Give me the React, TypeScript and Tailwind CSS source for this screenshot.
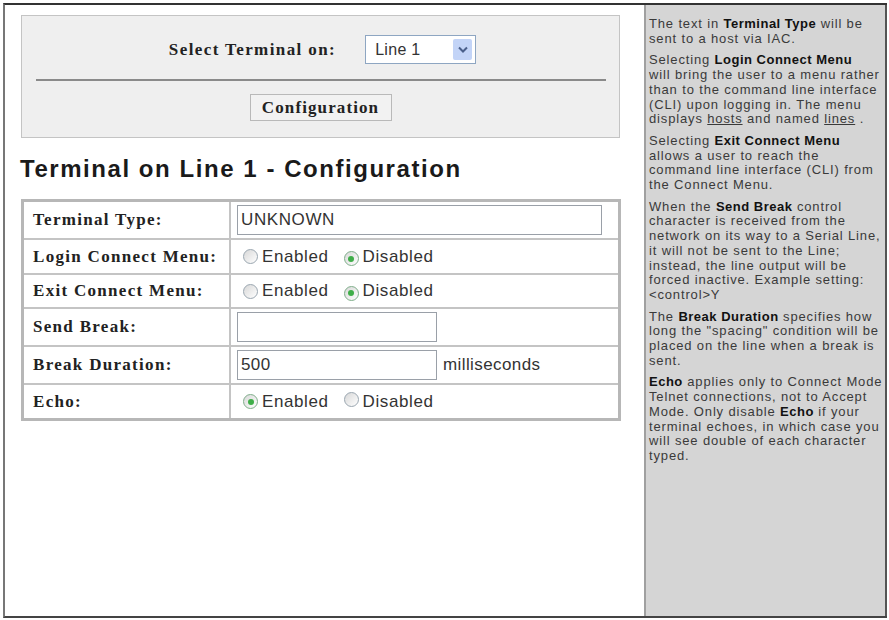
import React from "react";

const serif = { fontFamily: '"Liberation Serif", "Times New Roman", serif' };
const sans = { fontFamily: '"Liberation Sans", Arial, sans-serif' };

function Radio({ checked }: { checked?: boolean }) {
  return (
    <span
      className={
        "inline-flex w-[15px] h-[15px] rounded-full border items-center justify-center bg-gradient-to-br from-[#d8d8d8] to-white " +
        (checked ? "border-[#7fae8a]" : "border-[#9aa6b0]")
      }
    >
      {checked && <span className="w-[6px] h-[6px] rounded-full bg-[#3fae49]" />}
    </span>
  );
}

function RadioPair({ enabled }: { enabled: boolean }) {
  return (
    <div className="flex items-center ml-[6px] text-[17px] tracking-[0.6px] text-[#333]" style={sans}>
      <Radio checked={enabled} />
      <span className="ml-[4px]">Enabled</span>
      <span className="ml-[15px]">
        <Radio checked={!enabled} />
      </span>
      <span className="ml-[4px]">Disabled</span>
    </div>
  );
}

function Row({
  label,
  height,
  last,
  children,
}: {
  label: string;
  height: string;
  last?: boolean;
  children: React.ReactNode;
}) {
  return (
    <div className={"flex " + height + (last ? "" : " border-b-2 border-[#c4c4c4]")}>
      <div
        className="w-[207px] border-r-2 border-[#c4c4c4] flex items-center pl-[9px] font-bold text-[17px] tracking-[1.3px] text-[#222]"
        style={serif}
      >
        {label}
      </div>
      <div className="flex-1 flex items-center pl-[6px]">{children}</div>
    </div>
  );
}

const help: React.ReactNode[] = [
  <>
    The text in <b>Terminal Type</b> will be
    <br />
    sent to a host via IAC.
  </>,
  <>
    Selecting <b>Login Connect Menu</b>
    <br />
    will bring the user to a menu rather
    <br />
    than to the command line interface
    <br />
    (CLI) upon logging in. The menu
    <br />
    displays <span className="underline">hosts</span> and named <span className="underline">lines</span> .
  </>,
  <>
    Selecting <b>Exit Connect Menu</b>
    <br />
    allows a user to reach the
    <br />
    command line interface (CLI) from
    <br />
    the Connect Menu.
  </>,
  <>
    When the <b>Send Break</b> control
    <br />
    character is received from the
    <br />
    network on its way to a Serial Line,
    <br />
    it will not be sent to the Line;
    <br />
    instead, the line output will be
    <br />
    forced inactive. Example setting:
    <br />
    &lt;control&gt;Y
  </>,
  <>
    The <b>Break Duration</b> specifies how
    <br />
    long the "spacing" condition will be
    <br />
    placed on the line when a break is
    <br />
    sent.
  </>,
  <>
    <b>Echo</b> applies only to Connect Mode
    <br />
    Telnet connections, not to Accept
    <br />
    Mode. Only disable <b>Echo</b> if your
    <br />
    terminal echoes, in which case you
    <br />
    will see double of each character
    <br />
    typed.
  </>,
];

export default function App() {
  return (
    <div className="w-[889px] h-[620px] bg-white overflow-hidden pt-[3px] pl-[3px]">
      <div className="w-[884px] h-[615px] flex border-t-2 border-b-2 border-l-2 border-t-[#333] border-b-[#444] border-l-[#777]">
        {/* main */}
        <div className="w-[639px] pl-[16px] pt-[10px]">
          <div className="w-[599px] h-[123px] bg-[#efefef] border border-[#c4c4c4] flex flex-col items-center pt-[19px]">
            <div className="flex items-center h-[29px] ml-[4px]">
              <span className="font-bold text-[17px] tracking-[1.4px] text-[#222]" style={serif}>
                Select Terminal on:
              </span>
              <div className="ml-[29px] w-[111px] h-[29px] bg-white border border-[#8ea6c2] flex items-center justify-between pl-[9px] pr-[3px]">
                <span className="text-[16px] tracking-[0.3px] text-[#333]" style={sans}>
                  Line 1
                </span>
                <span className="w-[19px] h-[21px] bg-[#c3d4f7] rounded-[2px] flex items-center justify-center">
                  <svg width="10" height="7" viewBox="0 0 10 7">
                    <path d="M1 1.5 L5 5.5 L9 1.5" stroke="#4a5f8a" strokeWidth="2" fill="none" />
                  </svg>
                </span>
              </div>
            </div>
            <div className="w-[570px] h-[2px] bg-[#8a8a8a] mt-[15px]" />
            <button
              className="mt-[13px] w-[142px] h-[27px] bg-[#f2f2f2] border border-[#b9b9b9] font-bold text-[17px] tracking-[1.1px] text-[#222]"
              style={serif}
            >
              Configuration
            </button>
          </div>

          <h1
            className="mt-[17px] -ml-[1px] font-bold text-[24px] leading-[28px] tracking-[1.55px] text-[#1a1a1a]"
            style={sans}
          >
            Terminal on Line 1 - Configuration
          </h1>

          <div className="mt-[16px] w-[600px] border-[3px] border-[#b7b7b7]">
            <Row label="Terminal Type:" height="h-[38px]">
              <div
                className="w-[365px] h-[30px] border border-[#9aa0a8] bg-white flex items-center pl-[3px] text-[17px] tracking-[0.6px] text-[#333]"
                style={sans}
              >
                UNKNOWN
              </div>
            </Row>
            <Row label="Login Connect Menu:" height="h-[35px]">
              <RadioPair enabled={false} />
            </Row>
            <Row label="Exit Connect Menu:" height="h-[34px]">
              <RadioPair enabled={false} />
            </Row>
            <Row label="Send Break:" height="h-[38px]">
              <div className="w-[200px] h-[30px] border border-[#9aa0a8] bg-white" />
            </Row>
            <Row label="Break Duration:" height="h-[38px]">
              <div
                className="w-[200px] h-[30px] border border-[#9aa0a8] bg-white flex items-center pl-[3px] text-[17px] tracking-[0.4px] text-[#333]"
                style={sans}
              >
                500
              </div>
              <span className="ml-[6px] text-[17px] tracking-[0.4px] text-[#333]" style={sans}>
                milliseconds
              </span>
            </Row>
            <Row label="Echo:" height="h-[33px]" last>
              <RadioPair enabled={true} />
            </Row>
          </div>
        </div>

        {/* help sidebar */}
        <div
          className="flex-1 bg-[#d5d5d5] border-l-2 border-[#a0a0a0] border-r-2 border-r-[#555] pl-[3px] pt-[12px] text-[13px] leading-[14.7px] tracking-[0.85px] text-[#3a3a3a] whitespace-nowrap flex flex-col gap-[7px] overflow-hidden"
          style={sans}
        >
          {help.map((p, i) => (
            <p key={i} className="[&_b]:text-[#111] [&_b]:tracking-[0.5px]">
              {p}
            </p>
          ))}
        </div>
      </div>
    </div>
  );
}
